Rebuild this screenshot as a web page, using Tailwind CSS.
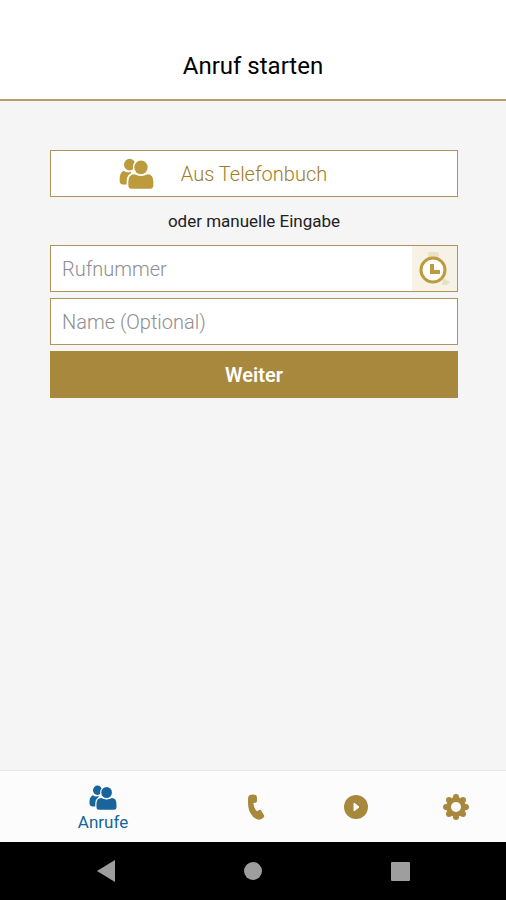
<!DOCTYPE html>
<html lang="de">
<head>
  <meta charset="UTF-8">
  <meta name="viewport" content="width=device-width, initial-scale=1.0">
  <title>Anruf starten</title>
  <script src="https://cdn.jsdelivr.net/npm/@tailwindcss/browser@4"></script>
</head>
<body class="min-h-screen flex flex-col bg-[#f5f5f5] font-['Roboto',sans-serif] text-[#222222]">
  <!-- Kopfzeile -->
  <header class="bg-white border-b-2 border-[#b5a069] pt-12 pb-[15px]">
    <h1 class="text-2xl leading-9 text-center text-black">Anruf starten</h1>
  </header>

  <!-- Formular -->
  <main class="flex-1 pl-[50px] pr-12 pt-[49px]">
    <form class="flex flex-col gap-[6px]">
      <button type="button" class="relative h-[47px] w-full flex items-center justify-center bg-white border border-[#b0935a] text-xl font-light text-[#a07d28]">
        <svg class="absolute left-[68px] top-[7px] w-[35px] h-[31px] text-[#bd9a3c]" viewBox="0 0 105 90" preserveAspectRatio="none" fill="currentColor">
          <circle cx="32" cy="19" r="17" />
          <path d="M14 37Q24 44 36 40V77H12Q2 77 2 66V58Q3 42 14 37Z" />
          <path d="M28 80V68Q28 48 46 47Q66 57 86 47Q103 48 103 68V80Q103 89 94 89H37Q28 89 28 80Z" stroke="#fff" stroke-width="10" paint-order="stroke" />
          <circle cx="66" cy="27" r="20" stroke="#fff" stroke-width="9" paint-order="stroke" />
        </svg>
        Aus Telefonbuch
      </button>

      <p class="h-9 text-[17px] leading-9 text-center">oder manuelle Eingabe</p>

      <div class="h-[47px] flex bg-white border border-[#b0935a]">
        <input type="tel" aria-label="Rufnummer" placeholder="Rufnummer" class="flex-1 min-w-0 px-[11px] text-xl font-light placeholder:text-[#8e8e8e] outline-none">
        <button type="button" aria-label="Letzte Anrufe" class="w-[45px] flex items-center justify-start bg-[#f6f2e6]">
          <svg class="w-[43px] h-[43px]" viewBox="0 0 43 43" fill="none">
            <path d="M16 11V7Q16 5 18 5H25Q27 5 27 7V11ZM31 31L38 35L35 38H30Z" fill="#e9e1c4" />
            <circle cx="21" cy="23" r="12" fill="#fff" stroke="#bd9a3c" stroke-width="3" />
            <path d="M20 17V25H28" stroke="#bd9a3c" stroke-width="4" />
          </svg>
        </button>
      </div>

      <div class="h-[47px] flex bg-white border border-[#b0935a]">
        <input type="text" aria-label="Name (Optional)" placeholder="Name (Optional)" class="flex-1 min-w-0 px-[11px] text-xl font-light placeholder:text-[#8e8e8e] outline-none">
      </div>

      <button type="submit" class="h-[47px] bg-[#a8883c] text-xl font-semibold text-white">Weiter</button>
    </form>
  </main>

  <!-- Navigation -->
  <nav class="h-[72px] flex bg-[#fcfcfc] border-t border-[#e8e8e8] text-[#a8883c]">
    <a href="#anrufe" class="flex-1 flex flex-col items-center pt-[14px] text-[#17659b]">
      <svg class="w-7 h-[25px]" viewBox="0 0 105 90" preserveAspectRatio="none" fill="currentColor">
        <circle cx="32" cy="19" r="17" />
        <path d="M14 37Q24 44 36 40V77H12Q2 77 2 66V58Q3 42 14 37Z" />
        <path d="M28 80V68Q28 48 46 47Q66 57 86 47Q103 48 103 68V80Q103 89 94 89H37Q28 89 28 80Z" stroke="#fcfcfc" stroke-width="9" paint-order="stroke" />
        <circle cx="66" cy="27" r="20" stroke="#fcfcfc" stroke-width="9" paint-order="stroke" />
      </svg>
      <span class="text-[17px] leading-6">Anrufe</span>
    </a>
    <a href="#telefon" aria-label="Telefon" class="w-[100px] flex items-center justify-center">
      <svg class="w-[18px] h-[26px]" viewBox="0 0 54 78" fill="currentColor">
        <path d="M8 3Q18 0 26 3Q30 5 30 12V22Q30 25 26 26L19 27Q20 43 30 52L37 48Q41 46 43 50L51 64Q53 67 50 70Q45 77 36 77Q20 75 10 57Q2 42 3 16Q3 6 8 3Z" />
      </svg>
    </a>
    <a href="#wiedergabe" aria-label="Wiedergabe" class="w-[100px] flex items-center justify-center">
      <svg class="w-6 h-6" viewBox="0 0 24 24">
        <circle cx="12" cy="12" r="12" fill="currentColor" />
        <path d="M10 8L15 12L10 16Z" fill="#fff" stroke="#fff" stroke-linejoin="round" />
      </svg>
    </a>
    <a href="#einstellungen" aria-label="Einstellungen" class="w-[100px] flex items-center justify-center">
      <svg class="w-[26px] h-[26px]" viewBox="0 0 26 26" fill="currentColor">
        <circle cx="13" cy="13" r="10" />
        <circle cx="13" cy="3" r="3" />
        <circle cx="20" cy="6" r="3" />
        <circle cx="23" cy="13" r="3" />
        <circle cx="20" cy="20" r="3" />
        <circle cx="13" cy="23" r="3" />
        <circle cx="6" cy="20" r="3" />
        <circle cx="3" cy="13" r="3" />
        <circle cx="6" cy="6" r="3" />
        <circle cx="13" cy="13" r="5" fill="#fcfcfc" />
      </svg>
    </a>
  </nav>

  <!-- Systemleiste -->
  <footer class="h-[58px] grid grid-cols-3 px-8 items-center justify-items-center bg-black text-[#9e9e9e]">
    <button type="button" aria-label="Zurück">
      <svg class="w-[18px] h-[22px]" viewBox="0 0 18 22" fill="currentColor"><path d="M0 11L18 0V22Z" /></svg>
    </button>
    <button type="button" aria-label="Startseite">
      <svg class="w-[18px] h-[18px]" viewBox="0 0 18 18" fill="currentColor"><circle cx="9" cy="9" r="9" /></svg>
    </button>
    <button type="button" aria-label="Übersicht">
      <svg class="w-[19px] h-[19px]" viewBox="0 0 19 19" fill="currentColor"><rect width="19" height="19" rx="1" /></svg>
    </button>
  </footer>
</body>
</html>
